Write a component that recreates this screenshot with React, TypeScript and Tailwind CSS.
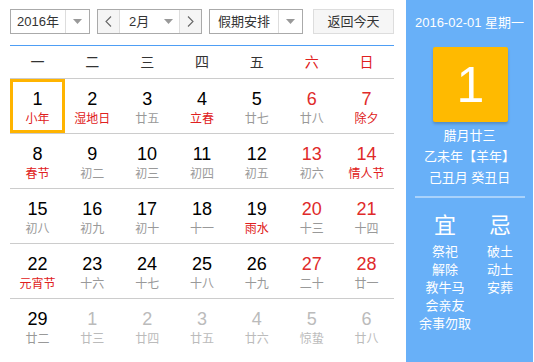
import React from "react";

type Day = { n: number; l: string; red?: boolean; hol?: boolean; other?: boolean; sel?: boolean };

const weeks: Day[][] = [
  [
    { n: 1, l: "小年", hol: true, sel: true },
    { n: 2, l: "湿地日", hol: true },
    { n: 3, l: "廿五" },
    { n: 4, l: "立春", hol: true },
    { n: 5, l: "廿七" },
    { n: 6, l: "廿八", red: true },
    { n: 7, l: "除夕", red: true, hol: true },
  ],
  [
    { n: 8, l: "春节", hol: true },
    { n: 9, l: "初二" },
    { n: 10, l: "初三" },
    { n: 11, l: "初四" },
    { n: 12, l: "初五" },
    { n: 13, l: "初六", red: true },
    { n: 14, l: "情人节", red: true, hol: true },
  ],
  [
    { n: 15, l: "初八" },
    { n: 16, l: "初九" },
    { n: 17, l: "初十" },
    { n: 18, l: "十一" },
    { n: 19, l: "雨水", hol: true },
    { n: 20, l: "十三", red: true },
    { n: 21, l: "十四", red: true },
  ],
  [
    { n: 22, l: "元宵节", hol: true },
    { n: 23, l: "十六" },
    { n: 24, l: "十七" },
    { n: 25, l: "十八" },
    { n: 26, l: "十九" },
    { n: 27, l: "二十", red: true },
    { n: 28, l: "廿一", red: true },
  ],
  [
    { n: 29, l: "廿二" },
    { n: 1, l: "廿三", other: true },
    { n: 2, l: "廿四", other: true },
    { n: 3, l: "廿五", other: true },
    { n: 4, l: "廿六", other: true },
    { n: 5, l: "惊蛰", other: true },
    { n: 6, l: "廿八", other: true },
  ],
];

const weekNames = ["一", "二", "三", "四", "五", "六", "日"];

function Caret() {
  return (
    <svg width="9" height="5" viewBox="0 0 9 5">
      <path d="M0 0 L9 0 L4.5 5 Z" fill="#999" />
    </svg>
  );
}

function Chevron({ right }: { right?: boolean }) {
  return (
    <svg width="7" height="11" viewBox="0 0 7 11">
      <path
        d={right ? "M1 0.5 L6 5.5 L1 10.5" : "M6 0.5 L1 5.5 L6 10.5"}
        stroke="#666"
        strokeWidth="1.1"
        fill="none"
      />
    </svg>
  );
}

export default function App() {
  return (
    <div
      className="w-[534px] h-[362px] flex bg-white overflow-hidden"
      style={{ fontFamily: '"Liberation Sans", Arial, "Noto Sans CJK SC", sans-serif' }}
    >
      {/* Calendar */}
      <div className="w-[406px] pl-[10px] pr-[12px]">
        <div className="flex h-[25px] mt-[9px] text-[13px] text-[#333]">
          <div className="w-[80px] flex border border-[#aaa]">
            <div className="flex-1 flex items-center justify-center">2016年</div>
            <div className="w-[24px] flex items-center justify-center border-l border-[#ddd]">
              <Caret />
            </div>
          </div>
          <div className="ml-[7px] w-[105px] flex border border-[#aaa]">
            <div className="w-[22px] flex items-center justify-center bg-[#f5f5f5] border-r border-[#ddd]">
              <Chevron />
            </div>
            <div className="flex-1 flex items-center pl-[9px] pr-[6px] justify-between">
              <span>2月</span>
              <Caret />
            </div>
            <div className="w-[22px] flex items-center justify-center bg-[#f5f5f5] border-l border-[#ddd]">
              <Chevron right />
            </div>
          </div>
          <div className="ml-[7px] w-[94px] flex border border-[#aaa]">
            <div className="flex-1 flex items-center justify-center">假期安排</div>
            <div className="w-[24px] flex items-center justify-center border-l border-[#ddd]">
              <Caret />
            </div>
          </div>
          <div className="ml-[10px] w-[81px] flex items-center justify-center border border-[#ddd] bg-[#f6f6f6]">
            返回今天
          </div>
        </div>

        <div className="mt-[11px] border-t border-[#4e9ef5]" />
        <div className="grid grid-cols-7 h-[33px] border-b border-[#ccc] text-[14px]">
          {weekNames.map((w, i) => (
            <div
              key={w}
              className={`flex items-center justify-center ${i >= 5 ? "text-[#e02020]" : "text-[#333]"}`}
            >
              {w}
            </div>
          ))}
        </div>

        {weeks.map((week, wi) => (
          <div
            key={wi}
            className={`grid grid-cols-7 h-[55px] ${wi < weeks.length - 1 ? "border-b border-[#ccc]" : ""}`}
          >
            {week.map((d, di) => {
              const numColor = d.other ? "text-[#bbb]" : d.red ? "text-[#e02a2a]" : "text-black";
              const lunColor = d.other ? "text-[#bbb]" : d.hol ? "text-[#e02020]" : "text-[#999]";
              return (
                <div
                  key={di}
                  className={`flex flex-col items-center ${
                    d.sel ? "border-[3px] border-[#ffb400] h-[54px] pt-[7px]" : "pt-[10px]"
                  }`}
                >
                  <div className={`text-[18px] leading-[20px] ${numColor}`}>{d.n}</div>
                  <div className={`text-[12px] leading-[16px] mt-[2px] ${lunColor}`}>{d.l}</div>
                </div>
              );
            })}
          </div>
        ))}
      </div>

      {/* Side panel */}
      <div className="w-[127px] bg-[#68b0f8] flex flex-col items-center text-white">
        <div className="mt-[15px] text-[13px] leading-[16px]">2016-02-01 星期一</div>
        <div className="mt-[16px] ml-[2px] w-[75px] h-[75px] bg-[#ffba00] rounded-[2px] shadow-[0_2px_3px_rgba(0,0,0,0.2)] flex items-center justify-center text-[50px] leading-none">
          1
        </div>
        <div className="mt-[3px] text-[13px] leading-[21px] text-center">
          <div>腊月廿三</div>
          <div>乙未年【羊年】</div>
          <div>己丑月 癸丑日</div>
        </div>
        <div className="mt-[8px] w-[110px] border-t-2 border-[#a9d2fb]" />
        <div className="mt-[13px] w-full flex text-[13px] leading-[18px]">
          <div className="w-[74px] flex flex-col items-center pl-[4px]">
            <div className="text-[22px] leading-[30px] mb-[2px]">宜</div>
            <div>祭祀</div>
            <div>解除</div>
            <div>教牛马</div>
            <div>会亲友</div>
            <div>余事勿取</div>
          </div>
          <div className="w-[40px] flex flex-col items-center">
            <div className="text-[22px] leading-[30px] mb-[2px]">忌</div>
            <div>破土</div>
            <div>动土</div>
            <div>安葬</div>
          </div>
        </div>
      </div>
    </div>
  );
}
